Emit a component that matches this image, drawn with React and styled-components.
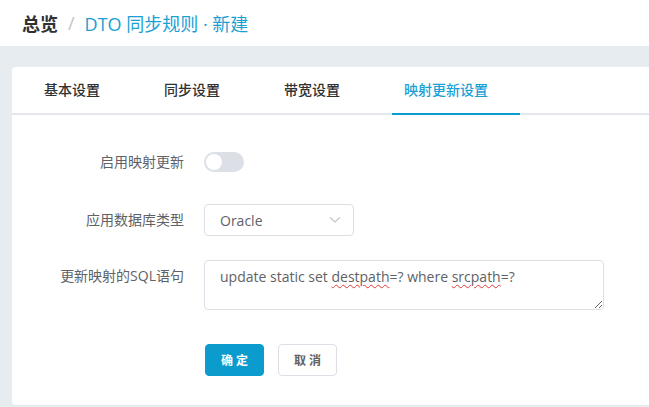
import React from "react";
import styled, { createGlobalStyle } from "styled-components";

const Global = createGlobalStyle`
  html, body { margin: 0; padding: 0; }
  body {
    background: #e6ecef;
    font-family: "Open Sans", "Noto Sans CJK SC", sans-serif;
    overflow: hidden;
  }
`;

const Page = styled.div`
  width: 649px;
  height: 407px;
  display: flex;
  flex-direction: column;
  overflow: hidden;
`;

const Header = styled.header`
  height: 46px;
  background: #fff;
  display: flex;
  align-items: center;
  padding-left: 22px;
  font-size: 18px;
  flex-shrink: 0;
`;

const Crumb = styled.span`
  color: ${p => (p.$muted ? "#1c9fd4" : "#303133")};
  font-weight: ${p => (p.$muted ? 400 : 700)};
`;

const Sep = styled.span`
  color: #c0c4cc;
  margin: 0 10px;
  font-weight: 400;
`;

const Main = styled.main`
  flex: 1;
  padding: 21px 0 0 12px;
  display: flex;
`;

const Card = styled.section`
  flex: 1;
  background: #fff;
  border-radius: 4px 0 0 4px;
  margin-bottom: 2px;
  display: flex;
  flex-direction: column;
`;

const Tabs = styled.nav`
  display: flex;
  border-bottom: 2px solid #e4e7ed;
  height: 46px;
`;

const Tab = styled.div`
  position: relative;
  padding: 0 32px;
  line-height: 46px;
  font-size: 14px;
  font-weight: 500;
  color: ${p => (p.$active ? "#1c9fd4" : "#303133")};
  &::after {
    content: "";
    display: ${p => (p.$active ? "block" : "none")};
    position: absolute;
    left: 20px;
    right: 0;
    bottom: -2px;
    height: 2px;
    background: #0c9bcd;
  }
`;

const Form = styled.form`
  padding-top: 31px;
  display: flex;
  flex-direction: column;
`;

const Row = styled.div`
  display: flex;
  align-items: ${p => (p.$top ? "flex-start" : "center")};
  min-height: 32px;
  margin-bottom: ${p => p.$mb || 24}px;
`;

const Label = styled.label`
  width: 172px;
  padding-right: 20px;
  text-align: right;
  font-size: 14px;
  color: #606266;
  line-height: 32px;
  box-sizing: content-box;
  flex-shrink: 0;
`;

const Switch = styled.span`
  width: 40px;
  height: 20px;
  border-radius: 10px;
  background: #dcdfe6;
  position: relative;
  display: inline-block;
  &::after {
    content: "";
    position: absolute;
    top: 2px;
    left: 2px;
    width: 16px;
    height: 16px;
    border-radius: 50%;
    background: #fff;
  }
`;

const Select = styled.div`
  width: 150px;
  height: 32px;
  box-sizing: border-box;
  border: 1px solid #dcdfe6;
  border-radius: 4px;
  display: flex;
  align-items: center;
  justify-content: space-between;
  padding: 0 12px 0 15px;
  font-size: 14px;
  color: #606266;
`;

const Textarea = styled.div`
  width: 400px;
  height: 50px;
  box-sizing: border-box;
  border: 1px solid #dcdfe6;
  border-radius: 4px;
  padding: 5px 15px;
  font-size: 14px;
  line-height: 21px;
  color: #606266;
  resize: vertical;
  overflow: auto;
`;

const Misspelled = styled.span`
  text-decoration: underline wavy #e53935;
  text-decoration-thickness: 1px;
  text-underline-offset: 2px;
`;

const Buttons = styled.div`
  display: flex;
  gap: 14px;
  padding-left: 193px;
`;

const Button = styled.button`
  height: 32px;
  width: 59px;
  border-radius: 4px;
  font-family: inherit;
  font-size: 12px;
  font-weight: 700;
  letter-spacing: 3px;
  padding: 0 0 0 3px;
  cursor: pointer;
  border: 1px solid ${p => (p.$primary ? "#0c9bcd" : "#dcdfe6")};
  background: ${p => (p.$primary ? "#0c9bcd" : "#fff")};
  color: ${p => (p.$primary ? "#fff" : "#606266")};
`;

const Chevron = () => (
  <svg width="12" height="8" viewBox="0 0 12 8">
    <path d="M1 1.5 L6 6 L11 1.5" fill="none" stroke="#c0c4cc" strokeWidth="1.2" />
  </svg>
);

export default function App() {
  return (
    <Page>
      <Global />
      <Header>
        <Crumb>总览</Crumb>
        <Sep>/</Sep>
        <Crumb $muted>DTO 同步规则 · 新建</Crumb>
      </Header>
      <Main>
        <Card>
          <Tabs>
            <Tab>基本设置</Tab>
            <Tab>同步设置</Tab>
            <Tab>带宽设置</Tab>
            <Tab $active>映射更新设置</Tab>
          </Tabs>
          <Form>
            <Row $mb={26}>
              <Label>启用映射更新</Label>
              <Switch />
            </Row>
            <Row>
              <Label>应用数据库类型</Label>
              <Select>
                <span>Oracle</span>
                <Chevron />
              </Select>
            </Row>
            <Row $top $mb={34}>
              <Label>更新映射的SQL语句</Label>
              <Textarea>
                update static set <Misspelled>destpath</Misspelled>=? where{" "}
                <Misspelled>srcpath</Misspelled>=?
              </Textarea>
            </Row>
            <Buttons>
              <Button $primary type="button">确定</Button>
              <Button type="button">取消</Button>
            </Buttons>
          </Form>
        </Card>
      </Main>
    </Page>
  );
}
